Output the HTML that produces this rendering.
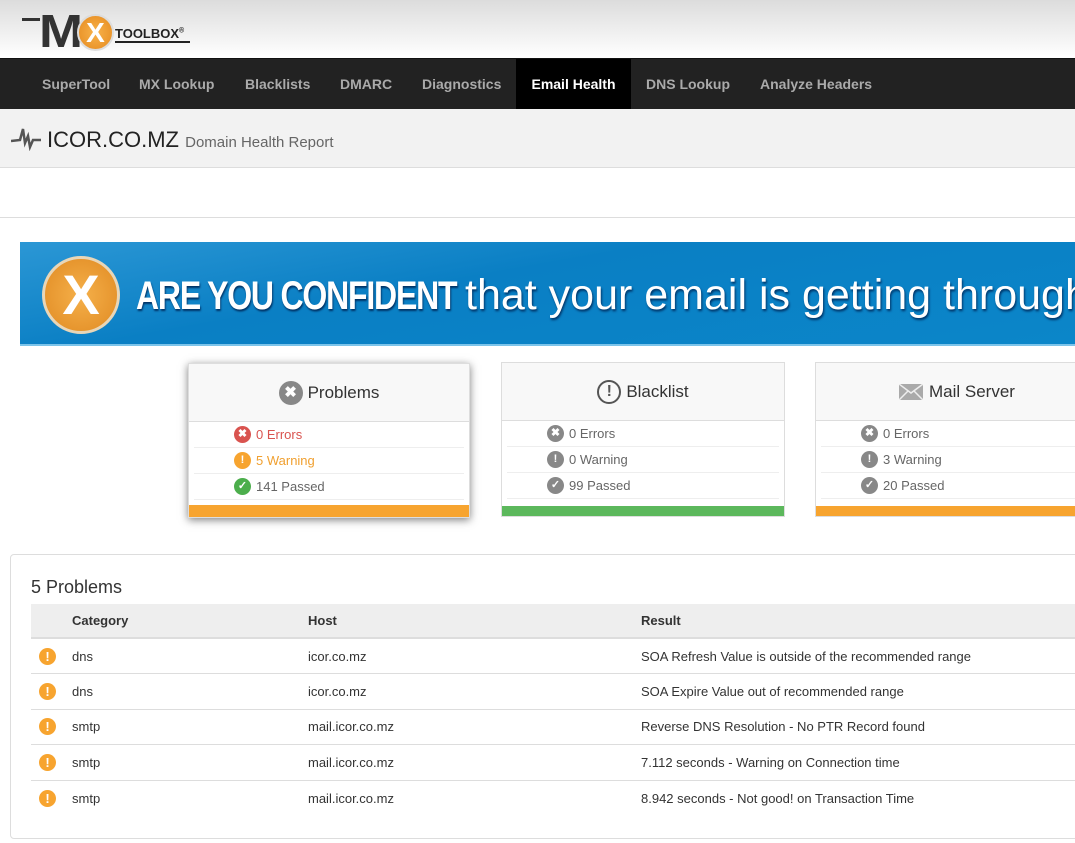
<!DOCTYPE html><html><head><style>
*{box-sizing:border-box;margin:0;padding:0}
body{width:1075px;height:843px;overflow:hidden;font-family:"Liberation Sans",sans-serif;background:#fff;position:relative;color:#333}
.abs{position:absolute}
.hdr{left:0;top:0;width:1075px;height:58px;background:linear-gradient(#dcdcdc,#fff)}
.nav{left:0;top:58px;width:1075px;height:51px;background:#222;border-top:1px solid #111}
.nav span{position:absolute;top:0;height:50px;line-height:50px;color:#aaa;font-weight:bold;font-size:14px}
.ttl{left:0;top:109px;width:1075px;height:59px;background:#f2f2f2;border-bottom:1px solid #ddd}
.card{background:#fff;border:1px solid #ddd}
.card .h{height:58px;background:#f8f8f8;border-bottom:1px solid #ddd;font-size:17px;color:#333;display:flex;align-items:center;justify-content:center}
.row{height:26px;font-size:13px;color:#666;margin:0 5px;border-bottom:1px solid #eee;padding-left:40px;display:flex;align-items:center}
.row:last-child{border-bottom:none}
.ic{display:inline-block;width:17px;height:17px;border-radius:50%;color:#fff;font-size:11px;line-height:17px;text-align:center;font-weight:bold;margin-right:5px}
.g{background:#888}
table{border-collapse:collapse;font-size:13px;position:absolute;left:31px;top:604px;width:1060px}
th{background:#eee;text-align:left;height:34px;border-bottom:2px solid #ddd;font-weight:bold}
td{height:35.5px;border-bottom:1px solid #ddd;color:#333}
.wi{display:inline-block;width:17px;height:17px;border-radius:50%;background:#f7a42f;color:#fff;font-weight:bold;text-align:center;line-height:17px;font-size:13px;margin-left:8px}
</style></head><body>
<div class="abs hdr"></div>
<div class="abs" style="left:22px;top:18px;width:18px;height:3px;background:#333"></div>
<div class="abs" style="left:39px;top:8px;font:bold 46px/46px 'Liberation Sans';color:#333;letter-spacing:-3px;transform:scaleX(1.15);transform-origin:left">M</div>
<div class="abs" style="left:77px;top:14px;width:37px;height:37px;border-radius:50%;background:radial-gradient(#f8b24a,#e58a1f);border:2px solid #ddd;color:#fff;font:bold 28px/33px 'Liberation Sans';text-align:center">X</div>
<div class="abs" style="left:115px;top:26px;font:bold 13px 'Liberation Sans';color:#222;border-bottom:2px solid #222;padding-right:6px">TOOLBOX<sup style="font-size:7px">®</sup></div>
<div class="abs nav">
<span style="left:42px">SuperTool</span><span style="left:139px">MX Lookup</span><span style="left:245px">Blacklists</span><span style="left:340px">DMARC</span><span style="left:422px">Diagnostics</span><span style="left:516px;width:115px;background:#000;color:#fff;text-align:center">Email Health</span><span style="left:646px">DNS Lookup</span><span style="left:760px">Analyze Headers</span></div>
<div class="abs ttl"></div>
<svg class="abs" style="left:11px;top:121px" width="30" height="30" viewBox="0 0 30 30"><path d="M0 20 L9 19 L12 8 L14 22 L17 15 L19 26 L22 19 L30 19" stroke="#555" stroke-width="2.5" fill="none"/></svg>
<div class="abs" style="left:47px;top:127px;font-size:22px;color:#222">ICOR.CO.MZ <span style="font-size:15px;color:#666">Domain Health Report</span></div>
<div class="abs" style="left:0;top:217px;width:1075px;height:1px;background:#ddd"></div>
<div class="abs" style="left:20px;top:242px;width:1055px;height:104px;background:linear-gradient(170deg,#2b97d5,#0a7fc4 40%,#0b86c9);border-bottom:2px solid #7cc4ea;overflow:hidden">
<div class="abs" style="left:22px;top:14px;width:78px;height:78px;border-radius:50%;background:radial-gradient(#f5b04a,#e08a22);border:3px solid #e8d6b8;color:#fff;font:bold 56px/72px 'Liberation Sans';text-align:center">X</div>
<div class="abs" style="left:116px;top:32px;white-space:nowrap;color:#fff;font-size:40px;font-weight:bold;letter-spacing:-1.5px;transform:scaleX(0.8);transform-origin:left;text-shadow:1px 2px 2px #036">ARE YOU CONFIDENT</div>
<div class="abs" style="left:445px;top:29px;white-space:nowrap;color:#fff;font-size:43px;text-shadow:1px 2px 2px #036">that your email is getting through</div></div>
<div class="abs card" style="left:188px;top:363px;width:282px;height:155px;box-shadow:0 2px 8px rgba(0,0,0,.5)">
<div class="h"><span class="ic g" style="width:24px;height:24px;line-height:24px;font-size:15px">✖</span>Problems</div>
<div class="row" style="color:#d9534f"><span class="ic" style="background:#d9534f">✖</span>0 Errors</div>
<div class="row" style="color:#f0a030"><span class="ic" style="background:#f7a42f">!</span>5 Warning</div>
<div class="row"><span class="ic" style="background:#4cae4c">✓</span>141 Passed</div>
<div class="abs" style="left:0;bottom:0;width:100%;height:12px;background:#f7a42f"></div></div>
<div class="abs card" style="left:501px;top:362px;width:284px;height:155px">
<div class="h"><span class="ic" style="width:24px;height:24px;line-height:20px;border:2px solid #555;color:#555;font-size:16px">!</span>Blacklist</div>
<div class="row"><span class="ic g">✖</span>0 Errors</div>
<div class="row"><span class="ic g">!</span>0 Warning</div>
<div class="row"><span class="ic g">✓</span>99 Passed</div>
<div class="abs" style="left:0;bottom:0;width:100%;height:10px;background:#5cb85c"></div></div>
<div class="abs card" style="left:815px;top:362px;width:270px;height:155px">
<div class="h" style="justify-content:flex-start;padding-left:83px"><svg width="24" height="16" style="margin-right:6px"><rect width="24" height="16" fill="#aaa"/><path d="M0 0 L12 9 L24 0 M0 16 L9 7 M24 16 L15 7" stroke="#eee" stroke-width="1.5" fill="none"/></svg>Mail Server</div>
<div class="row"><span class="ic g">✖</span>0 Errors</div>
<div class="row"><span class="ic g">!</span>3 Warning</div>
<div class="row"><span class="ic g">✓</span>20 Passed</div>
<div class="abs" style="left:0;bottom:0;width:100%;height:10px;background:#f7a42f"></div></div>
<div class="abs" style="left:10px;top:554px;width:1080px;height:285px;border:1px solid #ddd;border-radius:4px"></div>
<div class="abs" style="left:31px;top:577px;font-size:18px;color:#333">5 Problems</div>
<table><tr><th style="width:41px"></th><th style="width:236px">Category</th><th style="width:333px">Host</th><th>Result</th></tr>
<tr><td><span class="wi">!</span></td><td>dns</td><td>icor.co.mz</td><td>SOA Refresh Value is outside of the recommended range</td></tr>
<tr><td><span class="wi">!</span></td><td>dns</td><td>icor.co.mz</td><td>SOA Expire Value out of recommended range</td></tr>
<tr><td><span class="wi">!</span></td><td>smtp</td><td>mail.icor.co.mz</td><td>Reverse DNS Resolution - No PTR Record found</td></tr>
<tr><td><span class="wi">!</span></td><td>smtp</td><td>mail.icor.co.mz</td><td>7.112 seconds - Warning on Connection time</td></tr>
<tr><td style="border:none"><span class="wi">!</span></td><td style="border:none">smtp</td><td style="border:none">mail.icor.co.mz</td><td style="border:none">8.942 seconds - Not good! on Transaction Time</td></tr>
</table>
</body></html>
